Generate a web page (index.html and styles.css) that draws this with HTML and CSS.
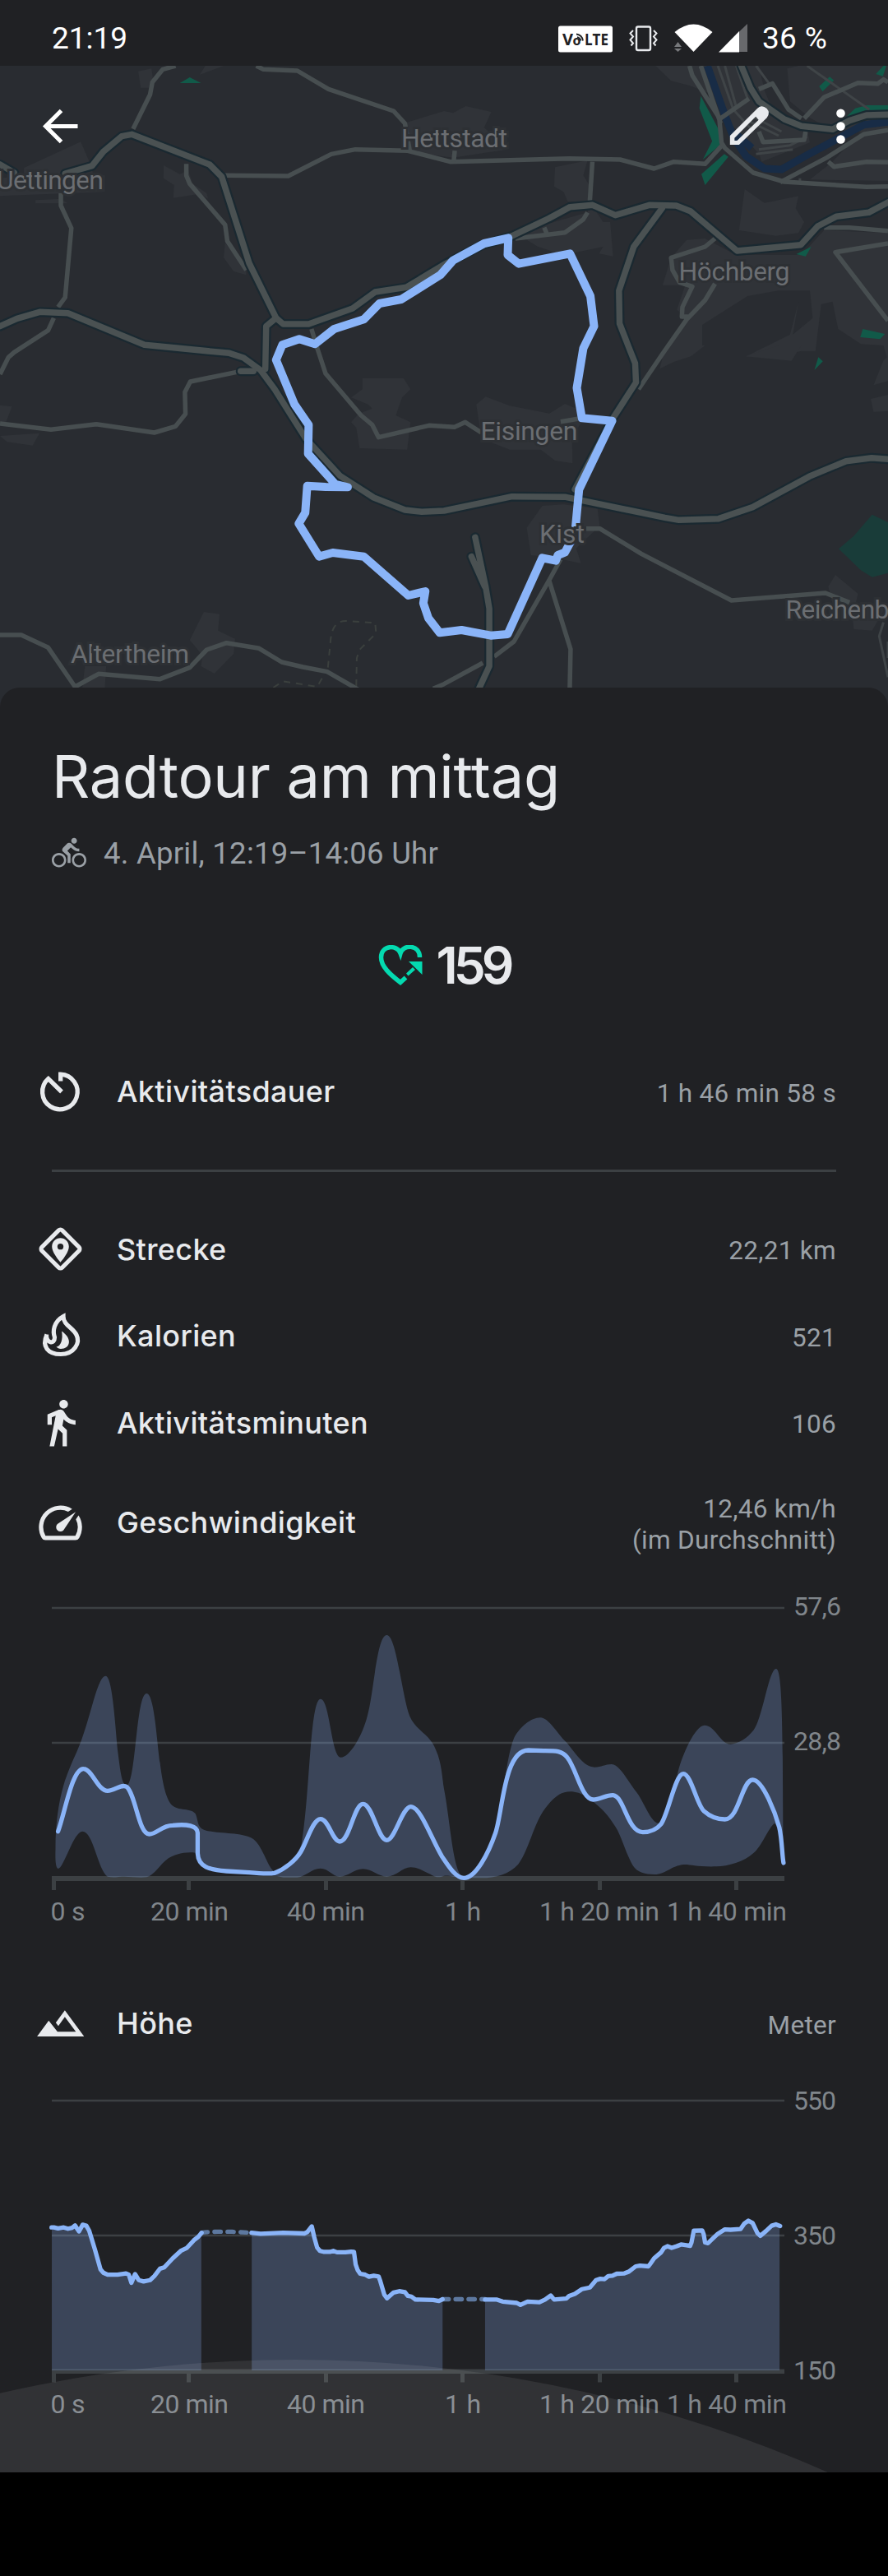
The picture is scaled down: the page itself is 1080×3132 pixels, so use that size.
FILE: index.html
```html
<!DOCTYPE html>
<html lang="de">
<head>
<meta charset="utf-8">
<title>Radtour am mittag</title>
<link rel="stylesheet" href="styles.css">
</head>
<body>
<header class="status">
  <span class="clock">21:19</span>
  <svg class="status-icons" viewBox="670 20 250 50">
    <rect x="679" y="31.500" width="66" height="32" rx="2.500" fill="#fff"/>
    <text class="volte" x="684" y="54.500" textLength="13" lengthAdjust="spacingAndGlyphs">V</text>
    <text class="volte volte-o" x="696.500" y="54.500">o</text>
    <text class="volte" x="711" y="54.500" textLength="29" lengthAdjust="spacingAndGlyphs">LTE</text>
    <path d="M701 41.500q7 1 8 8M702 45q3.500 1 4.500 4.500" fill="none" stroke="#202124" stroke-width="1.800"/>
    <rect x="774" y="32.500" width="17" height="28.500" rx="2" fill="none" stroke="#e8eaed" stroke-width="2.400"/>
    <path d="M770 37l-3.500 3.500 3.500 4-3.500 4 3.500 4-2.500 3M795 37l3.500 3.500-3.500 4 3.500 4-3.500 4 2.500 3" fill="none" stroke="#e8eaed" stroke-width="2"/>
    <path d="M820.500 39Q843.500 20 866.500 39L843.500 63Z" fill="#fff"/>
    <path d="M820 57l4.500-6 4.500 6zM820 59h9l-4.500 4z" fill="#77797c"/>
    <path d="M909 29V63H899V38.500Z" fill="#68696c"/><path d="M899 38V63.500H874Z" fill="#fff"/>
  </svg>
  <span class="battery">36 %</span>
</header>

<section class="map">
  <svg class="map-canvas" viewBox="0 240 3136 2340" preserveAspectRatio="none">
    <defs>
      <g id="major">
        <path d="M0 600L50 630M230 633L325 605 365 553 430 497 465 490 740 600 783 645 880 960 975 1160 1000 1182H1090L1245 1125 1325 1065 1435 1048 1568 965 1700 895 1805 862 1938 797 2013 755 2093 748 2173 785 2293 748 2388 750 2438 770 2603 915 2828 893 2888 825 2953 790 3068 775 3136 738"/>
        <path d="M975 1160L940 1190 937 1345M850 1354H895M2338 760L2238 900 2186 1060 2188 1180 2218 1260 2243 1325 2246 1395 2168 1520 2030 1785"/>
        <path d="M0 1190L60 1162 140 1138 240 1142 510 1258 810 1288 860 1305 920 1350 970 1420 1080 1600 1200 1735 1320 1815 1430 1860 1490 1867 1568 1863 1698 1835 1808 1811 1998 1813 2348 1888 2398 1897 2538 1892 2658 1850 2858 1738 2988 1682 3078 1670 3136 1675"/>
        <path d="M1678 1960L1715 2140 1728 2220V2430L1690 2515M1665 2030L1712 2140M2618 240L2650 320 2680 370 2770 435 2830 460 2940 472 3000 440 3060 420 3136 418"/>
      </g>
    </defs>
    <g class="urban">
      <path d="M488 260L535 250 540 285 525 320 497 320ZM725 240H790L705 273ZM85 612L285 517 320 600 330 640 370 640 370 700 0 715 0 650 85 640ZM125 730L215 725 240 742H125ZM578 603L635 635 665 620 680 670 730 705 735 725 705 707 612 722 615 675 577 650ZM795 885L870 985 870 1003 825 990 790 940ZM1425 450L1568 405 1600 412 1645 387 1735 408 1710 465 1725 480 1790 495 1790 545 1600 575 1420 550Z"/>
      <path d="M2315 240H2680L2700 330 2740 430 2850 470 2860 520 2690 590 2680 560 2560 430 2530 350 2435 312 2370 295ZM1960 610L2075 585 2060 640 2090 690 2080 735 2005 735 1990 700 1957 680ZM1820 850L2075 775 2085 740 2130 810 2155 810 2165 935 2115 925 2130 900 1990 930 1900 900Z"/>
      <path d="M2820 240H3136V660L2860 655 2940 590 3040 480 2940 475 2860 430 2790 370 2780 250ZM2630 690L2700 740 2820 715 2810 760 2840 810 2820 850 2740 860 2610 840ZM2425 875L2490 870 2600 930 2830 930 2910 840 3136 850 3136 1320 3120 1260 3040 1255 2960 1200 2940 1100 2900 1110 2880 1280 2830 1280 2730 1305 2635 1300 2790 1220 2820 1100 2800 1220 2870 1160 2860 1060 2750 1060 2640 1080 2480 1185 2480 1260 2490 1260 2440 1300 2380 1320 2330 1345 2350 1260 2430 1160 2390 1130 2420 1040 2340 1040 2370 940Z"/>
      <path d="M0 1478L42 1483 22 1538 0 1545ZM0 1590L140 1580 115 1625 25 1612ZM1280 1380H1425L1450 1420 1420 1450 1398 1515 1450 1540 1438 1640 1270 1635 1258 1560 1240 1540 1265 1510 1315 1490 1300 1475 1240 1450 1280 1420ZM720 2232L775 2240 770 2300 830 2330 825 2385 757 2457 710 2430 715 2390 670 2335ZM300 2430H375L370 2515H290ZM1682 1475L1715 1447 1800 1480 1940 1508 1995 1473 2035 1490 2055 1540 2020 1590 2022 1690 1960 1680 1910 1640 1800 1640 1700 1600ZM1915 1845L1990 1840 2110 1855 2118 1920 2070 1965 2035 2000 2052 2055 1960 2035 1875 2025 1860 1925ZM2950 2097L3030 2165 3020 2210 3136 2200 3080 2300 3015 2295 3010 2240 2940 2200 2925 2140Z"/>
      <path d="M2632 1300L2750 1260H2830L2795 1316ZM3120 1315L3136 1300V1390L3085 1405ZM3075 1455L3136 1440V1500L3085 1502Z"/>
    </g>
    <g class="park">
      <path d="M635 303L670 282 710 303ZM2475 350L2542 480 2542 530 2482 582 2515 515 2470 395ZM2477 635L2558 562 2572 572 2490 675ZM2893 315L2930 280 2945 293 2905 334ZM3093 270L3120 240H3130L3118 278ZM2990 425L3020 395 3060 384H3136V402L3050 405 2995 430ZM2812 927L2865 900 2845 935ZM3047 1200L3125 1218 3108 1237 3038 1230ZM2890 1303L2906 1318 2876 1350Z"/>
      <path fill="#193c39" d="M2962 2002L3015 1955 3080 1877 3136 1905V2090L3080 2105 3040 2080Z"/>
    </g>
    <path class="water" d="M2498 240L2560 420 2590 500 2635 570 2700 615 2760 618 2860 560 2960 505 3050 455 3136 445M2600 490L2655 540"/>
    <g class="lane">
      <path d="M2850 240L3070 400M2670 240L2720 310M2535 240L2590 400 2660 480M2560 240L2600 390M2600 240L2640 360M2650 420L2760 480M2640 440L2750 495M2680 545L2790 530 2850 500M2670 562L2800 545M3120 2270L3105 2320 3136 2470M3136 2340V2400M2825 650V665"/>
    </g>
    <g class="minor">
      <path d="M620 240L575 253 538 300 530 345 470 470M905 240L930 253 1050 258 1160 325 1390 405 1430 450 1447 550M785 640L1018 642 1170 562 1255 545 1440 550 1590 590 2010 578 2190 582 2310 615 2380 590 2490 598 2550 530"/>
      <path d="M658 598V640L670 670 795 820 803 880 870 985M215 705V750L252 832 230 1085 205 1120M190 1160L170 1205 50 1285 30 1303 0 1365M1100 1200L1122 1275 1150 1363 1275 1515 1315 1550 1337 1595 1515 1552 1605 1558 1643 1540 1700 1578"/>
      <path d="M0 1545L180 1567 340 1547 545 1578 620 1555 655 1510 653 1430 672 1392 850 1354M0 2316H75L170 2362 265 2505 348 2458 565 2477 670 2435 730 2370 800 2345 915 2365 995 2415 1070 2433 1155 2450 1265 2515"/>
      <path d="M2092 590L2083 735M2075 775L2060 800 1995 848 1820 870M1922 830L1930 850M1606 550L1602 590M2525 870L2490 900 2370 940 2375 985 2400 1030 2445 1045 2410 1120 2408 1155H2430M2525 1035L2490 1095 2425 1165 2340 1290 2255 1420"/>
      <path d="M2070 1928H2118L2265 2020 2583 2190 2915 2163 3000 2198M1980 2040L1940 2115 1815 2340 1745 2395M1705 2418L1568 2495 1530 2512M1940 2120L2015 2368 2012 2515M1980 1538L2040 1528"/>
      <path d="M2435 240L2445 275 2540 430 2548 520 2560 540 2660 630 2770 663 3060 682 3136 680M2475 240L2545 450M2540 435L2645 360M2755 665L2920 575 3050 490 3136 475M2925 590L2945 608 3060 590 3136 592M2840 432L2910 355 3030 302 3100 305 3120 290 3136 300M2680 325L2728 305 2785 400 2830 432M2680 480L2695 518 2840 510 2845 480M2910 830H3000L3136 842M3136 888L2950 920 3136 1170"/>
    </g>
    <path class="track" d="M1158 2435L1168 2330Q1175 2265 1220 2265L1325 2272 1328 2310 1270 2370 1260 2400 1258 2510M965 2508L1000 2485 1120 2505 1145 2460"/>
    <use href="#major" class="casing"/>
    <use href="#major" class="major"/>
    <path class="route" d="M1228 1777L1185 1767 1088 1655 1090 1550 1040 1475 975 1313 997 1258 1057 1237 1112 1255 1180 1200 1285 1165 1340 1107 1417 1092 1555 1003 1600 950 1710 888 1795 868 1793 930 1832 962 2013 925 2085 1080 2098 1190 2060 1270 2037 1415 2055 1525 2162 1535 2045 1785 2030 1950 2008 1990 1995 2015 1970 2025 1963 2045 1915 2035 1793 2313 1733 2318 1630 2298 1553 2308 1513 2255 1495 2200 1502 2157 1442 2172 1285 2030 1175 2016 1127 2030 1055 1910 1078 1870 1085 1772 1150 1776Z"/>
  </svg>
  <svg class="map-labels" viewBox="0 80 1080 780">
    <text x="488" y="179" textLength="129">Hettstadt</text>
    <text x="-4" y="230" textLength="130">Uettingen</text>
    <text x="825.500" y="341" textLength="135">Höchberg</text>
    <text x="584.500" y="535" textLength="118">Eisingen</text>
    <text x="656" y="660" textLength="55">Kist</text>
    <text x="86" y="806" textLength="144">Altertheim</text>
    <text x="955.500" y="751.500" textLength="126">Reichenb</text>
    <path d="M94.500 153.500H58M74.500 134.500L55.500 153.500 74.500 172.500" fill="none" stroke="#fff" stroke-width="5"/>
    <path transform="translate(540 0) scale(.34439 .33333)" d="M1010 528V495L1107 395Q1122 380 1140 396 1154 412 1140 430L1042 528ZM1026 513H1035L1111 437 1101 425 1026 503Z" fill="#e8eaed" fill-rule="evenodd"/>
    <g fill="#fff"><circle cx="1022.500" cy="137.700" r="5.300"/><circle cx="1022.500" cy="153.600" r="5.300"/><circle cx="1022.500" cy="169.500" r="5.300"/></g>
  </svg>
</section>

<main class="sheet">
  <h1>Radtour am mittag</h1>
  <div class="when">
    <svg viewBox="0 0 24 24"><path d="M15.500 5.500c1.100 0 2-.9 2-2s-.9-2-2-2-2 .9-2 2 .9 2 2 2zM5 12c-2.800 0-5 2.200-5 5s2.200 5 5 5 5-2.200 5-5-2.200-5-5-5zm0 8.500c-1.900 0-3.500-1.600-3.500-3.500s1.600-3.500 3.500-3.500 3.500 1.600 3.500 3.500-1.600 3.500-3.500 3.500zm5.800-10l2.400-2.400.8.8c1.300 1.300 3 2.100 5.100 2.100V9c-1.500 0-2.700-.6-3.600-1.500l-1.900-1.900c-.5-.4-1-.6-1.600-.6s-1.100.2-1.400.6L7.800 8.400c-.4.4-.6.9-.6 1.400 0 .6.200 1.100.6 1.400L11 14v5h2v-6.200l-2.200-2.300zM19 12c-2.800 0-5 2.200-5 5s2.200 5 5 5 5-2.200 5-5-2.200-5-5-5zm0 8.500c-1.900 0-3.500-1.600-3.500-3.500s1.600-3.500 3.500-3.500 3.500 1.600 3.500 3.500-1.600 3.500-3.500 3.500z"/></svg>
    <span>4. April, 12:19–14:06 Uhr</span>
  </div>
  <div class="points">
    <svg viewBox="0 0 54 50"><path d="M50.500 15C50.500 -1 30 -1 27 10 23 -1 3.500 0 3.500 15 3.500 26 14 35.500 27 45.500L33.500 39.500" fill="none" stroke="#04dab0" stroke-width="5.500"/><path d="M37 20H53.500V36ZM36.500 37.500L34 34.500 42 27 45 30Z" fill="#04dab0"/></svg>
    <span>159</span>
  </div>

  <div class="row first">
    <svg class="icon" viewBox="0 0 63 63"><path d="M31.700 18.500V10.200A21.300 21.300 0 1 1 16.800 15.500L33 31.500" fill="none" stroke="#e8eaed" stroke-width="5.300"/></svg>
    <span class="label">Aktivitätsdauer</span><span class="value">1 h 46 min 58 s</span>
  </div>
  <hr>
  <div class="row">
    <svg class="icon" viewBox="0 0 63 63"><rect x="14" y="14" width="35" height="35" rx="3" transform="rotate(45 31.500 31.500)" fill="none" stroke="#e8eaed" stroke-width="5"/><path transform="translate(13.860 15.400) scale(1.470)" fill-rule="evenodd" d="M12 2C8.130 2 5 5.130 5 9c0 5.250 7 13 7 13s7-7.750 7-13c0-3.870-3.130-7-7-7zm0 9.500a2.500 2.500 0 0 1 0-5 2.500 2.500 0 0 1 0 5z"/></svg>
    <span class="label">Strecke</span><span class="value">22,21 km</span>
  </div>
  <div class="row">
    <svg class="icon" viewBox="0 0 63 63"><path d="M15 29.500C8.500 44 16 53.500 32 53.500S56 40 51 30C46.500 21 35 18 35 7.500 23 14 22 26 24.500 33 24.500 42 14 40.500 14.500 29.500" fill="none" stroke="#e8eaed" stroke-width="5.200"/><path d="M33 25.500C47 35 43 47 32 47 29.500 47 28 46 26.500 44.500 32 44 35 35 33 25.500Z"/></svg>
    <span class="label">Kalorien</span><span class="value">521</span>
  </div>
  <div class="row">
    <svg class="icon" viewBox="0 0 24 24"><path d="M13.500 5.500c1.100 0 2-.9 2-2s-.9-2-2-2-2 .9-2 2 .9 2 2 2zM9.800 8.900L7 23h2.100l1.800-8 2.100 2v6h2v-7.500l-2.100-2 .6-3C14.800 12 16.800 13 19 13v-2c-1.900 0-3.500-1-4.300-2.400l-1-1.600c-.4-.6-1-1-1.700-1-.3 0-.5.1-.8.1L6 8.300V13h2V9.600l1.800-.7"/></svg>
    <span class="label">Aktivitätsminuten</span><span class="value">106</span>
  </div>
  <div class="row tall">
    <svg class="icon" viewBox="0 0 24 24"><path d="M20.380 8.570l-1.230 1.850a8 8 0 0 1-.22 7.580H5.070A8 8 0 0 1 15.580 6.850l1.850-1.230A10 10 0 0 0 3.350 19a2 2 0 0 0 1.720 1h13.850a2 2 0 0 0 1.740-1 10 10 0 0 0-.27-10.440zm-9.790 6.840a2 2 0 0 0 2.830 0l5.660-8.490-8.490 5.660a2 2 0 0 0 0 2.830z"/></svg>
    <span class="label">Geschwindigkeit</span><span class="value">12,46 km/h<br>(im Durchschnitt)</span>
  </div>

  <svg class="chart speed" viewBox="0 0 1080 440">
    <path class="grid" d="M63 35H954M63 199H954"/>
    <path class="axis" d="M63 361H954V367H63ZM63 367h5v11h-5zM227 367h5v11h-5zM394 367h5v11h-5zM560 367h5v11h-5zM727 367h5v11h-5zM893 367h5v11h-5z"/>
    <g transform="scale(.34439 .33333)">
      <path class="area" d="M196 980C196 900 205 820 225 750 250 670 270 640 290 580 325 480 345 355 373 353 395 353 405 500 415 620 425 700 430 752 447 752 480 752 480 417 518 417 545 417 555 600 565 670 575 750 585 790 600 815 620 850 670 830 690 855 700 875 695 905 720 914 760 930 850 922 890 945 925 965 945 1050 966 1064 1010 1064 1062 990 1066 960 1095 780 1095 437 1132 437 1165 437 1170 650 1204 650 1235 650 1280 570 1297 500 1320 420 1330 204 1366 204 1400 204 1420 430 1447 500 1470 555 1520 565 1540 625 1560 670 1562 730 1568 765 1590 880 1600 1080 1638 1088 1680 1090 1725 1000 1750 925 1780 800 1785 660 1815 580 1835 540 1875 505 1908 505 1940 507 1965 560 2000 595 2030 630 2060 686 2100 686 2125 686 2135 675 2160 675 2190 677 2215 735 2250 780 2275 815 2300 890 2325 890 2370 860 2385 740 2395 700 2410 640 2455 533 2488 533 2525 533 2545 602 2580 602 2605 602 2640 580 2662 550 2695 500 2715 327 2741 327 2760 327 2762 500 2764 650L2766 1050C2760 980 2750 900 2735 890 2715 905 2690 975 2660 1000 2630 1030 2570 1048 2530 1048 2460 1050 2440 1040 2415 1041 2370 1045 2350 1078 2310 1077 2280 1077 2250 1070 2235 1045 2205 990 2195 930 2165 890 2140 850 2110 820 2070 795 2040 770 2000 770 1975 785 1945 805 1920 840 1905 870 1880 920 1860 1000 1830 1040 1800 1075 1750 1090 1700 1090H1638C1600 1088 1590 1080 1568 1082 1540 1095 1530 1080 1510 1072 1490 1060 1470 1051 1451 1051 1420 1051 1400 1085 1366 1085 1335 1085 1315 1057 1282 1057 1250 1057 1230 1085 1200 1085 1175 1085 1160 1055 1132 1055 1100 1055 1080 1085 1050 1088H1000L966 1080 800 1070C700 1050 705 1000 690 998 650 993 615 1005 595 1018 565 1040 545 1080 518 1087 490 1090 460 1085 440 1085 420 1085 400 1090 380 1085 345 1060 330 920 291 920 260 920 225 1056 205 1056 193 1050 196 1000 196 980Z"/>
      <path class="line" d="M205 920C230 850 255 690 295 692 325 692 345 772 380 772 405 772 430 745 448 758 480 790 490 930 527 930 555 930 570 898 610 898 660 893 697 898 698 925V1000C700 1050 740 1060 800 1065L880 1070C920 1074 950 1076 970 1072 1005 1058 1045 1025 1062 995 1085 955 1105 875 1132 875 1160 875 1175 957 1200 957 1235 957 1250 820 1282 820 1315 820 1335 952 1366 952 1395 952 1420 830 1451 830 1485 830 1525 950 1560 1010 1580 1040 1608 1090 1638 1090 1680 1090 1725 1000 1750 925 1775 850 1780 625 1865 624L1920 626C1960 626 1985 625 2003 650 2035 690 2055 804 2094 804 2120 804 2140 787 2165 788 2205 792 2215 922 2270 923 2300 923 2320 912 2335 893 2362 850 2385 710 2413 710 2440 710 2460 820 2485 845 2510 868 2540 876 2560 876 2610 876 2620 732 2658 732 2695 732 2740 860 2752 905 2762 950 2762 1010 2767 1035"/>
    </g>
    <g class="ticks">
      <text x="61.500" y="414.500" textLength="42">0 s</text><text x="183" y="414.500" textLength="95">20 min</text><text x="349" y="414.500" textLength="95">40 min</text><text x="541" y="414.500" textLength="44">1 h</text><text x="656" y="414.500" textLength="146">1 h 20 min</text><text x="811" y="414.500" textLength="146">1 h 40 min</text>
      <text x="965" y="43.500" textLength="58">57,6</text><text x="965" y="208" textLength="58">28,8</text>
    </g>
  </svg>

  <div class="row height">
    <svg class="icon" viewBox="0 0 63 63"><path transform="translate(-42 -28.500) scale(.34439 .40816)" d="M131 185L172 138 203 171H268L229 127 206 154 197 144 229 107 297 185Z"/></svg>
    <span class="label">Höhe</span><span class="value">Meter</span>
  </div>

  <svg class="chart" viewBox="0 0 1080 486">
    <path class="grid" d="M63 34H954M63 198H954"/>
    <path class="axis" d="M63 360.500H954V366H63ZM63 366h5v10.500h-5zM227 366h5v10.500h-5zM394 366h5v10.500h-5zM560 366h5v10.500h-5zM727 366h5v10.500h-5zM893 366h5v10.500h-5z"/>
    <g transform="translate(0 -120) scale(.34439 .40816)">
      <path class="area" d="M183 1181V755L205 758 225 755 240 759 265 749 279 767 292 747 305 750 315 765 335 820 355 880 380 896 445 892 464 920 477 894 490 912 507 916 530 912 565 878 610 847 640 824 660 816 685 793 711 771V1181ZM889 1181V771L1000 771 1075 773 1101 752 1120 815 1145 828 1250 828 1256 865 1272 893 1303 902 1337 901 1357 955 1367 966 1390 949 1430 948 1440 959 1467 970 1563 969V1181ZM1713 1181V970H1755L1838 986 1863 976 1905 978 1945 958 1957 970 2000 967 2055 939 2083 934 2105 912 2135 909 2178 893 2205 892 2245 871 2290 871 2310 847 2357 811 2437 810 2450 765 2480 764 2490 800 2515 790 2535 774 2560 761 2615 760 2643 735 2658 742 2685 780 2740 746 2753 751V1181Z"/>
      <path class="line gap" d="M712 771Q740 768 770 768H820L888 771M1563 969H1713"/>
      <path class="line" d="M182 755H190L205 758 225 755 240 759 255 756 265 749 279 767 292 747 305 750 315 765 335 820 355 880 365 890 380 896H415L445 892 455 896 464 920 477 894 490 912 507 916 530 912 545 900 565 878 580 874 610 847 640 824 660 816 685 793 700 783 712 771M888 771L920 774 1000 771 1075 773 1085 769 1101 752 1110 785 1120 815 1130 825 1145 828H1165L1177 825 1190 829H1220L1240 827 1250 828 1256 865 1263 882 1272 893 1290 896 1303 902 1320 899 1337 901 1343 915 1357 955 1367 966 1390 949 1410 945 1430 948 1440 959 1453 961 1467 970 1530 971 1550 974 1563 969M1713 970H1755L1775 976 1825 980 1838 986 1863 976 1905 978 1925 970 1945 958 1957 970 2000 967 2010 959 2030 953 2055 939 2083 934 2105 912 2120 908 2135 909 2148 900 2163 899 2178 893 2205 892 2220 887 2245 871 2260 869 2290 871 2297 863 2310 847 2335 829 2345 816 2357 811 2372 816 2390 811 2405 806 2425 808 2437 810 2442 800 2450 765 2480 764 2485 775 2490 800 2500 802 2515 790 2535 774 2560 761 2580 762 2615 760 2628 744 2643 735 2658 742 2675 772 2685 780 2705 766 2725 750 2740 746 2755 751"/>
    </g>
    <g class="ticks">
      <text x="61.500" y="413.500" textLength="42">0 s</text><text x="183" y="413.500" textLength="95">20 min</text><text x="349" y="413.500" textLength="95">40 min</text><text x="541" y="413.500" textLength="44">1 h</text><text x="656" y="413.500" textLength="146">1 h 20 min</text><text x="811" y="413.500" textLength="146">1 h 40 min</text>
      <text x="965" y="45" textLength="52">550</text><text x="965" y="208.500" textLength="52">350</text><text x="965" y="372.500" textLength="52">150</text>
    </g>
    <circle cx="359" cy="1949" r="1600" fill="#fff" fill-opacity=".08"/>
  </svg>
</main>
</body>
</html>
```
FILE: styles.css
```css
* { box-sizing: border-box; }
body { margin: 0; width: 1080px; height: 3132px; background: #000; color: #e8eaed; font-family: Roboto, "Liberation Sans", sans-serif; }
svg { display: block; flex: none; }

.status { height: 80px; padding: 0 73px 0 63px; display: flex; align-items: center; background: #202124; color: #fff; font-size: 37px; line-height: 80px; }
.clock { padding-top: 14px; }
.battery { padding-top: 14px; width: 80px; margin-left: 7px; letter-spacing: .3px; white-space: nowrap; }
.status-icons { width: 250px; height: 50px; margin: 10px 0 0 auto; }
.volte { font: 700 20px "Open Sans", sans-serif; fill: #202124; }
.volte-o { font-size: 16px; }

.map { position: relative; height: 780px; background: #292c31; overflow: hidden; }
.map-canvas { width: 1080px; height: 780px; }
.map-labels { position: absolute; inset: 0; width: 1080px; height: 780px; }
.map-labels text { font-size: 32px; fill: #6b6e72; stroke: #2d3034; stroke-width: 6px; paint-order: stroke; }
.map-canvas path { vector-effect: non-scaling-stroke; stroke-linejoin: round; }
.urban { fill: #303338; }
.park { fill: #115a49; }
.water { fill: none; stroke: #182c46; stroke-width: 9px; }
.lane { fill: none; stroke: #3f4447; stroke-width: 3px; }
.minor { fill: none; stroke: #474e50; stroke-width: 5.500px; }
.track { fill: none; stroke: #3b403e; stroke-width: 2px; stroke-dasharray: 8 7; }
.casing { fill: none; stroke: #1a2931; stroke-width: 12px; stroke-linecap: round; }
.major { fill: none; stroke: #4a5152; stroke-width: 7.500px; stroke-linecap: round; }
.route { fill: none; stroke: #8ab4f8; stroke-width: 10px; }

.sheet { position: relative; margin-top: -24px; height: 2170px; padding-top: 68px; border-radius: 24px 24px 0 0; background: #202124; display: flex; flex-direction: column; }
h1 { margin: 0 0 31px 63px; font: 400 72px/80px Inter, sans-serif; letter-spacing: -.25px; white-space: nowrap; }
.when { display: flex; align-items: center; height: 44px; margin: 0 0 80px 63px; color: #9aa0a6; fill: #9aa0a6; font-size: 36.500px; letter-spacing: .25px; gap: 21px; }
.when svg { width: 42px; height: 42px; }
.points { display: flex; align-items: center; justify-content: center; gap: 17px; height: 70px; margin-bottom: 65px; font: 600 62px/70px Inter, sans-serif; }
.points svg { width: 54px; height: 50px; }
.points span { letter-spacing: -5px; }

.row { flex: none; display: flex; align-items: center; height: 105.500px; padding: 0 63px 0 42px; fill: #e8eaed; }
.first { height: 106px; }
.tall { height: 137.500px; }
.height { height: 120px; margin-top: 40px; }
.icon { width: 63px; height: 63px; margin-right: 37px; }
.label { font: 500 36px/44px Inter, sans-serif; letter-spacing: .35px; }
.value { margin-left: auto; padding-top: 5px; color: #9aa0a6; font-size: 31.500px; line-height: 38px; letter-spacing: .3px; text-align: right; }
hr { width: 954px; height: 3px; margin: 42px 63px 41px; border: 0; background: #3c4043; }

.chart { width: 1080px; height: 486px; }
.speed { height: 440px; }
.grid { stroke: #3c4043; stroke-width: 2.500px; }
.axis { fill: #3c4043; }
.area { fill: #8ab4f8; fill-opacity: .25; }
.line { fill: none; stroke: #8ab4f8; stroke-width: 5.300px; stroke-linecap: round; stroke-linejoin: round; vector-effect: non-scaling-stroke; }
.gap { stroke: #5d789f; stroke-dasharray: 7.500 8.300; }
.ticks text { font-size: 32px; fill: #80868b; }
```
